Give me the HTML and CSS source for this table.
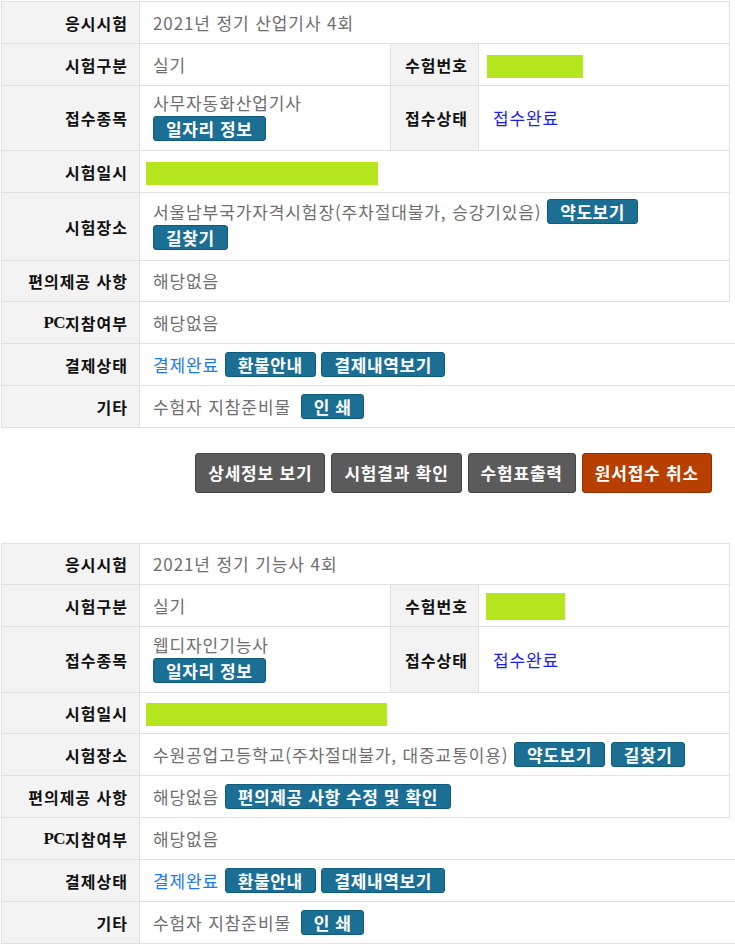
FILE: index.html
```html
<!DOCTYPE html>
<html lang="ko">
<head>
<meta charset="utf-8">
<title>원서접수 내역</title>
<link rel="stylesheet" href="styles.css">
</head>
<body>
<div class="block">
  <div class="tbl">
    <div class="th">응시시험</div>
    <div class="td span3"><div class="in">2021년 정기 산업기사 4회</div></div>
    <div class="th">시험구분</div>
    <div class="td"><div class="in">실기</div></div>
    <div class="th th2">수험번호</div>
    <div class="td"><div class="in"><span class="redact r-num1"></span></div></div>
    <div class="th">접수종목</div>
    <div class="td multi"><div class="in">사무자동화산업기사<br><a class="btn">일자리 정보</a></div></div>
    <div class="th th2">접수상태</div>
    <div class="td"><div class="in"><span class="st-blue">접수완료</span></div></div>
    <div class="th">시험일시</div>
    <div class="td span3"><div class="in"><span class="redact r-date1"></span></div></div>
    <div class="th">시험장소</div>
    <div class="td span3 multi2"><div class="in">서울남부국가자격시험장(주차절대불가, 승강기있음) <a class="btn">약도보기</a> <a class="btn">길찾기</a></div></div>
    <div class="th short">편의제공 사항</div>
    <div class="td span3 short"><div class="in">해당없음</div></div>
  </div>
  <div class="tbl wide">
    <div class="th"><span class="lat">PC</span>지참여부</div>
    <div class="td"><div class="in">해당없음</div></div>
    <div class="th">결제상태</div>
    <div class="td"><div class="in"><span class="pay">결제완료</span> <a class="btn">환불안내</a> <a class="btn">결제내역보기</a></div></div>
    <div class="th">기타</div>
    <div class="td"><div class="in">수험자 지참준비물 <a class="btn print">인 쇄</a></div></div>
  </div>
  <div class="actions">
    <a class="abtn">상세정보 보기</a>
    <a class="abtn">시험결과 확인</a>
    <a class="abtn">수험표출력</a>
    <a class="abtn cancel">원서접수 취소</a>
  </div>
</div>

<div class="block second">
  <div class="tbl">
    <div class="th short">응시시험</div>
    <div class="td span3 short"><div class="in">2021년 정기 기능사 4회</div></div>
    <div class="th">시험구분</div>
    <div class="td"><div class="in">실기</div></div>
    <div class="th th2">수험번호</div>
    <div class="td"><div class="in"><span class="redact r-num2"></span></div></div>
    <div class="th">접수종목</div>
    <div class="td multi multi3"><div class="in">웹디자인기능사<br><a class="btn">일자리 정보</a></div></div>
    <div class="th th2">접수상태</div>
    <div class="td"><div class="in"><span class="st-blue">접수완료</span></div></div>
    <div class="th short">시험일시</div>
    <div class="td span3 short"><div class="in"><span class="redact r-date2"></span></div></div>
    <div class="th">시험장소</div>
    <div class="td span3"><div class="in">수원공업고등학교(주차절대불가, 대중교통이용) <a class="btn">약도보기</a> <a class="btn">길찾기</a></div></div>
    <div class="th">편의제공 사항</div>
    <div class="td span3"><div class="in">해당없음 <a class="btn">편의제공 사항 수정 및 확인</a></div></div>
  </div>
  <div class="tbl wide">
    <div class="th"><span class="lat">PC</span>지참여부</div>
    <div class="td"><div class="in">해당없음</div></div>
    <div class="th">결제상태</div>
    <div class="td"><div class="in"><span class="pay">결제완료</span> <a class="btn">환불안내</a> <a class="btn">결제내역보기</a></div></div>
    <div class="th">기타</div>
    <div class="td"><div class="in">수험자 지참준비물 <a class="btn print">인 쇄</a></div></div>
  </div>
</div>
</body>
</html>
```

FILE: styles.css
```css
html, body {
  background: #ffffff;
}
body {
  margin: 1px 0 0 1px;
  width: 734px;
  overflow: hidden;
  font-family: "Noto Sans CJK KR", "Noto Sans", sans-serif;
}
.block.second {
  margin-top: 50px;
}
.tbl {
  display: grid;
  grid-template-columns: 138px 251px 88px 251px;
  width: 728px;
  border-top: 1px solid #e0e0e0;
  border-left: 1px solid #e0e0e0;
}
.tbl.wide {
  grid-template-columns: 138px 640px;
  width: 778px;
  border-top: none;
}
.th, .td {
  box-sizing: border-box;
  min-height: 42px;
  border-right: 1px solid #e0e0e0;
  border-bottom: 1px solid #e0e0e0;
  display: flex;
  align-items: center;
}
.th.short, .td.short {
  min-height: 41px;
}
.th {
  background: #f3f3f3;
  justify-content: flex-end;
  padding-right: 11px;
  font-size: 16px;
  font-weight: 700;
  letter-spacing: 1px;
  color: #111111;
}
.th2 {
  padding-right: 10px;
}
.lat {
  font-family: "Liberation Serif", serif;
  font-size: 17px;
  letter-spacing: -0.5px;
}
.td {
  padding: 0 20px 0 13px;
  font-size: 17px;
  letter-spacing: 0.9px;
  line-height: 26px;
  color: #6e6e6e;
}
.span3 {
  grid-column: span 3;
}
.multi {
  padding-top: 4px;
  padding-bottom: 8px;
  align-items: flex-start;
}
.multi3 {
  padding-top: 5px;
}
.multi2 {
  padding-top: 6px;
  padding-bottom: 9px;
  align-items: flex-start;
}
.btn {
  display: inline-block;
  box-sizing: border-box;
  height: 25px;
  line-height: 23px;
  padding: 0 12px;
  vertical-align: top;
  background: #1b6f94;
  border: 1px solid #125a7a;
  border-radius: 3px;
  color: #ffffff;
  font-weight: 700;
  font-size: 17px;
  letter-spacing: 0.6px;
}
.btn.print {
  padding: 0 12px;
  margin-left: 4px;
}
.st-blue {
  color: #1c1cf5;
  padding-left: 1px;
}
.pay {
  color: #1a78f0;
}
.redact {
  display: inline-block;
  background: #b5e61d;
  vertical-align: middle;
}
.r-num1 {
  width: 96px;
  height: 23px;
  margin-left: -5px;
  margin-top: -1px;
}
.r-date1 {
  width: 232px;
  height: 23px;
  margin-left: -7px;
}
.r-num2 {
  width: 79px;
  height: 27px;
  margin-left: -6px;
  margin-top: 2px;
}
.r-date2 {
  width: 241px;
  height: 23px;
  margin-left: -7px;
}
.actions {
  display: flex;
  justify-content: flex-end;
  gap: 6px;
  padding-right: 23px;
  margin-top: 25px;
}
.abtn {
  display: block;
  box-sizing: border-box;
  height: 40px;
  line-height: 38px;
  padding: 0 12px;
  background: #5b5b5b;
  border: 1px solid #444444;
  border-radius: 3px;
  color: #ffffff;
  font-size: 17px;
  font-weight: 700;
  letter-spacing: 0.8px;
}
.abtn.cancel {
  background: #b73f00;
  border-color: #8f3100;
}
```
